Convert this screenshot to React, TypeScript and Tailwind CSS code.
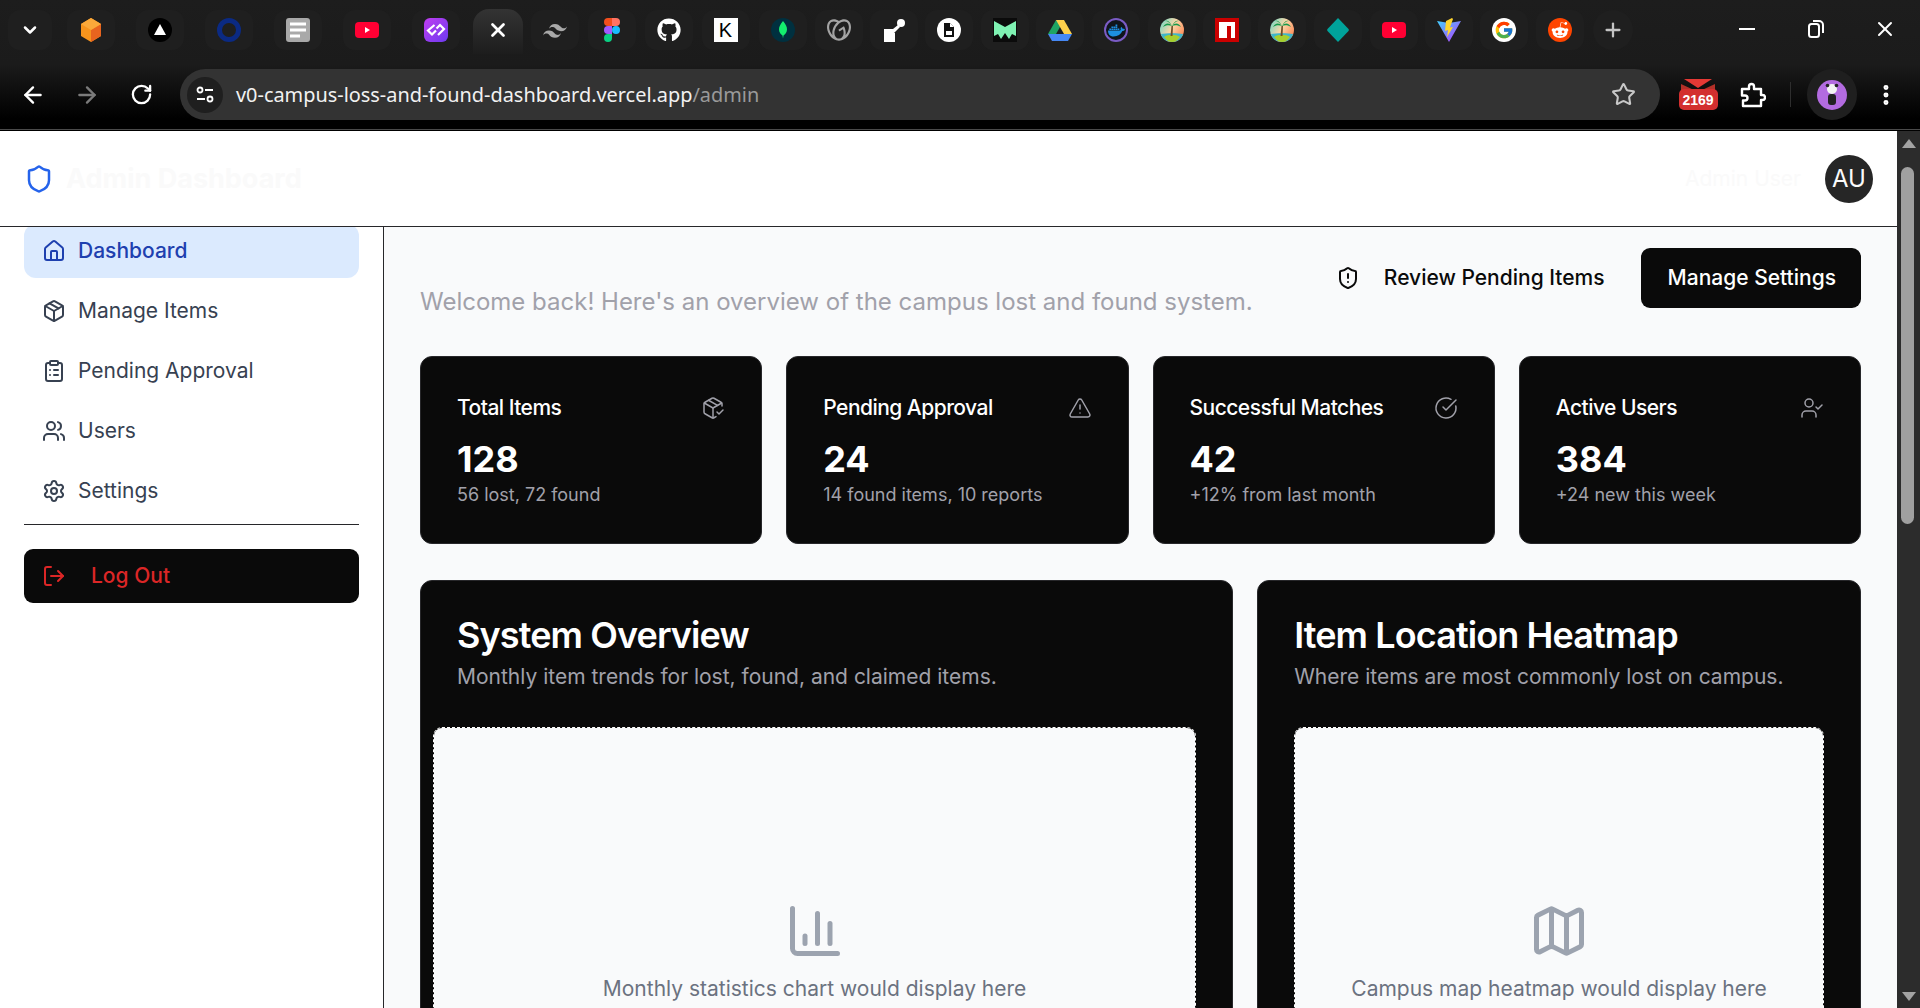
import React from "react";
import {
	ArrowLeft,
	ArrowRight,
	ChartColumn,
	ChevronDown,
	CircleCheckBig,
	ClipboardList,
	EllipsisVertical,
	House,
	LogOut,
	Map as MapIcon,
	Package,
	PackageCheck,
	Plus,
	RotateCw,
	Settings,
	Shield,
	ShieldAlert,
	Star,
	TriangleAlert,
	UserCheck,
	Users,
	X,
} from "lucide-react";
import { FaDocker, FaGithub, FaRedditAlien } from "react-icons/fa";
import { FcGoogle } from "react-icons/fc";
import { SiGodaddy } from "react-icons/si";

const YouTube = () => (
	<svg width="24" height="24" viewBox="0 0 24 24">
		<rect x="0" y="4" width="24" height="16" rx="4" fill="#ff0033" />
		<path d="M10 9l5 3-5 3z" fill="#fff" />
	</svg>
);

const Island = () => (
	<svg width="24" height="24" viewBox="0 0 24 24">
		<defs>
			<linearGradient id="sky" x1="0" y1="0" x2="1" y2="0.6">
				<stop offset="0" stopColor="#5fd6c8" />
				<stop offset="0.55" stopColor="#fbd6a8" />
				<stop offset="1" stopColor="#fb8f5c" />
			</linearGradient>
		</defs>
		<circle cx="12" cy="12" r="12" fill="url(#sky)" />
		<path d="M1 16c5-1 17-1 22 0-1 5-6 8-11 8S2 21 1 16z" fill="#3fb6c9" />
		<path d="M4 19c4-3 12-3 16 0-2 3-5 5-8 5s-6-2-8-5z" fill="#a8cf2c" />
		<path d="M10.500 18l1-10h1.500l-.500 10z" fill="#6b4a24" />
		<path d="M12 8C9 4 5 5 3 9c3-2 6-2 9-1zm0 0c3-4 7-3 9 1-3-2-6-2-9-1zm0 0c-2-4-4-6-7-5 3 0 5 2 7 5zm0 0c2-4 4-6 7-5-3 0-5 2-7 5z" fill="#159a4c" />
	</svg>
);

const tabs: { slot: string; icon: React.ReactNode; active?: boolean }[] = [
	{
		slot: "w-[69px]",
		icon: (
			<svg width="24" height="24" viewBox="0 0 24 24">
				<path d="M12 0l10 6v12l-10 6-10-6V6z" fill="#f7941d" />
				<path d="M12 12l10-6v12l-10 6z" fill="#e8641f" />
				<path d="M12 0l10 6-10 6L2 6z" fill="#fba93a" />
			</svg>
		),
	},
	{
		slot: "w-[69px]",
		icon: (
			<svg width="24" height="24" viewBox="0 0 24 24">
				<circle cx="12" cy="12" r="12" fill="#000" />
				<path d="M12 6l6 11H6z" fill="#fff" />
			</svg>
		),
	},
	{
		slot: "w-[69px]",
		icon: (
			<svg width="24" height="24" viewBox="0 0 24 24">
				<circle cx="12" cy="12" r="9.500" fill="none" stroke="#0b2a83" strokeWidth="5" />
			</svg>
		),
	},
	{
		slot: "w-[69px]",
		icon: (
			<svg width="24" height="24" viewBox="0 0 24 24">
				<rect width="24" height="24" rx="3" fill="#a9a9a9" />
				<path d="M4 6h16M4 12h16M4 18h10" stroke="#fff" strokeWidth="3" />
			</svg>
		),
	},
	{ slot: "w-[69px]", icon: <YouTube /> },
	{
		slot: "w-[69px]",
		icon: (
			<svg width="24" height="24" viewBox="0 0 24 24">
				<defs>
					<linearGradient id="purple" x1="0" y1="0" x2="1" y2="1">
						<stop offset="0" stopColor="#c03df0" />
						<stop offset="1" stopColor="#6d3bf0" />
					</linearGradient>
				</defs>
				<rect width="24" height="24" rx="6" fill="url(#purple)" />
				<path d="M10.500 7L4 12.500l4 4 4-4M14 17l6-6-4-4-3.500 3.500" fill="none" stroke="#fff" strokeWidth="2.200" />
			</svg>
		),
	},
	{ slot: "w-[56px]", active: true, icon: <X size={22} strokeWidth={3} className="text-white" /> },
	{
		slot: "w-[57px]",
		icon: (
			<svg width="24" height="24" viewBox="0 0 24 24" fill="#a8a8a8">
				<path d="M12 6c-3.200 0-5.200 1.600-6 4.800 1.200-1.600 2.600-2.200 4.200-1.800.9.2 1.600.9 2.300 1.600 1.200 1.200 2.600 2.600 5.500 2.600 3.200 0 5.200-1.600 6-4.800-1.200 1.600-2.600 2.200-4.200 1.800-.9-.2-1.600-.9-2.300-1.600C16.300 7.400 14.900 6 12 6zM6 12.600c-3.200 0-5.200 1.600-6 4.800 1.200-1.600 2.600-2.200 4.200-1.800.9.2 1.600.9 2.300 1.600 1.200 1.200 2.600 2.600 5.500 2.600 3.200 0 5.200-1.600 6-4.800-1.200 1.600-2.600 2.200-4.200 1.800-.9-.2-1.600-.9-2.300-1.600-1.200-1.200-2.600-2.600-5.500-2.600z" />
			</svg>
		),
	},
	{
		slot: "w-[57px]",
		icon: (
			<svg width="24" height="24" viewBox="0 0 16 24">
				<path d="M0 4a4 4 0 014-4h4v8H4a4 4 0 01-4-4z" fill="#f24e1e" />
				<path d="M8 0h4a4 4 0 010 8H8z" fill="#ff7262" />
				<path d="M0 12a4 4 0 014-4h4v8H4a4 4 0 01-4-4z" fill="#a259ff" />
				<circle cx="12" cy="12" r="4" fill="#1abcfe" />
				<path d="M0 20a4 4 0 014-4h4v4a4 4 0 01-8 0z" fill="#0acf83" />
			</svg>
		),
	},
	{ slot: "w-[57px]", icon: <FaGithub size={24} className="text-white" /> },
	{
		slot: "w-[57px]",
		icon: (
			<div className="flex h-6 w-6 items-center justify-center bg-white font-['Liberation_Sans',sans-serif] text-[20px] leading-none text-black">
				K
			</div>
		),
	},
	{
		slot: "w-[57px]",
		icon: (
			<svg width="24" height="24" viewBox="0 0 24 24">
				<circle cx="12" cy="12" r="12" fill="#00303f" />
				<path d="M12 3c3 3.500 4 6 4 8.500 0 3-2 5-3.500 6l-.5 3-.5-3C10 16.500 8 14.500 8 11.500 8 9 9 6.500 12 3z" fill="#13ef6e" />
			</svg>
		),
	},
	{ slot: "w-[55px]", icon: <SiGodaddy size={24} className="text-[#a3a3a3]" /> },
	{
		slot: "w-[55px]",
		icon: (
			<svg width="24" height="24" viewBox="0 0 24 24" fill="#fff">
				<circle cx="19" cy="5" r="4" />
				<path d="M16 7l2 2-6 6H13v9H2V11h9z" />
			</svg>
		),
	},
	{
		slot: "w-[56px]",
		icon: (
			<svg width="24" height="24" viewBox="0 0 24 24">
				<circle cx="12" cy="12" r="12" fill="#fff" />
				<path d="M7 5h6l4 4v10H7z" fill="#111" />
				<path d="M13 5v4h4z" fill="#fff" />
				<rect x="9" y="13" width="6" height="4" fill="#fff" />
			</svg>
		),
	},
	{
		slot: "w-[55px]",
		icon: (
			<svg width="24" height="24" viewBox="0 0 24 24">
				<rect width="24" height="24" fill="#0b0b0b" />
				<path d="M1 3l11 6 11-6v15l-4-2-3 5-4-6-4 6-3-5-4 2z" fill="#7ff2b3" />
			</svg>
		),
	},
	{
		slot: "w-[56px]",
		icon: (
			<svg width="24" height="24" viewBox="0 0 24 24">
				<path d="M8 2h8l-8 14H0z" fill="#1fa463" />
				<path d="M16 2l8 14h-8L8 2z" fill="#ffd04b" />
				<path d="M0 16l4 7h16l4-7z" fill="#4688f4" />
			</svg>
		),
	},
	{
		slot: "w-[56px]",
		icon: (
			<div className="relative flex h-6 w-6 items-center justify-center rounded-full bg-[#10151c] ring-2 ring-inset ring-[#7b5cc4]">
				<FaDocker size={17} className="text-[#1d8fe0]" />
			</div>
		),
	},
	{ slot: "w-[55px]", icon: <Island /> },
	{
		slot: "w-[56px]",
		icon: (
			<svg width="24" height="24" viewBox="0 0 24 24">
				<rect width="24" height="24" fill="#cb0000" />
				<path d="M4 4h16v16h-4V8h-4v12H4z" fill="#fff" />
			</svg>
		),
	},
	{ slot: "w-[54px]", icon: <Island /> },
	{
		slot: "w-[58px]",
		icon: (
			<svg width="24" height="24" viewBox="0 0 24 24">
				<path d="M12 0l10.500 11a1.500 1.500 0 010 2L12 24 1.500 13a1.500 1.500 0 010-2z" fill="#00a39b" />
			</svg>
		),
	},
	{ slot: "w-[53px]", icon: <YouTube /> },
	{
		slot: "w-[58px]",
		icon: (
			<svg width="24" height="24" viewBox="0 0 24 24">
				<defs>
					<linearGradient id="vite" x1="0" y1="0" x2="1" y2="1">
						<stop offset="0" stopColor="#41d1ff" />
						<stop offset="1" stopColor="#bd34fe" />
					</linearGradient>
				</defs>
				<path d="M0 3l12 2 12-2-12 21z" fill="url(#vite)" />
				<path d="M15 0L9 3l-1 10 3-1-1 7 6-10-3 .5 3-8.500z" fill="#ffd62e" />
			</svg>
		),
	},
	{
		slot: "w-[52px]",
		icon: (
			<div className="flex h-6 w-6 items-center justify-center rounded-full bg-white">
				<FcGoogle size={20} />
			</div>
		),
	},
	{
		slot: "w-[60px]",
		icon: (
			<div className="flex h-6 w-6 items-center justify-center rounded-full bg-[#ff4500]">
				<FaRedditAlien size={18} className="text-white" />
			</div>
		),
	},
];

const BrowserChrome = () => (
	<div className="h-[131px] w-full shrink-0 border-b border-black">
		<div className="h-[130px] border-b border-[#4a4a4a] bg-[linear-gradient(#1d1d1d_0%,#1b1b1b_50%,#000000_92%)]">
			<div className="flex h-[54px]">
				<div className="ml-2 mt-[10px] flex h-10 w-11 items-center justify-center rounded-xl bg-[#1f1f1f]">
					<ChevronDown size={20} strokeWidth={3} className="text-white" />
				</div>
				<div className="flex pl-1">
					{tabs.map((tab, index) => (
						<div key={index} className={`${tab.slot} flex justify-center`}>
							{tab.active ? (
								<div className="mt-[9px] flex h-[45px] w-[50px] items-start justify-center rounded-t-2xl bg-[linear-gradient(#333333,#1d1d1d)] pt-[10px]">
									{tab.icon}
								</div>
							) : (
								<div className="mt-[10px] flex h-10 w-[48px] items-center justify-center rounded-xl bg-[#1f1f1f]">
									{tab.icon}
								</div>
							)}
						</div>
					))}
				</div>
				<div className="ml-[3px] mt-[10px] flex h-10 w-10 items-center justify-center rounded-full bg-[#1f1f1f]">
					<Plus size={22} strokeWidth={2.500} className="text-[#c4c4c4]" />
				</div>
				<div className="ml-auto flex h-[62px] items-center pb-1 text-white">
					<div className="flex w-[69px] justify-center">
						<div className="h-[2.500px] w-4 bg-white" />
					</div>
					<div className="flex w-[69px] justify-center">
						<svg width="16" height="18" viewBox="0 0 16 18" fill="none" stroke="#fff" strokeWidth="2">
							<rect x="1" y="4" width="10" height="13" rx="2.500" />
							<path d="M5 1h6a4 4 0 014 4v8" />
						</svg>
					</div>
					<div className="flex w-[70px] justify-center">
						<X size={24} strokeWidth={2} />
					</div>
				</div>
			</div>
			<div className="flex h-[66px] items-start pt-[15px]">
				<div className="ml-[6px] flex h-[51px] w-[54px] items-center justify-center text-white">
					<ArrowLeft size={26} strokeWidth={2.200} />
				</div>
				<div className="flex h-[51px] w-[54px] items-center justify-center text-[#7b7b7b]">
					<ArrowRight size={26} strokeWidth={2.200} />
				</div>
				<div className="flex h-[51px] w-[54px] items-center justify-center text-white">
					<RotateCw size={23} strokeWidth={2.400} />
				</div>
				<div className="ml-3 flex h-[51px] w-[1480px] items-center rounded-full bg-[#333333] pl-[7px]">
					<div className="flex h-9 w-9 items-center justify-center rounded-full bg-[#1f1f1f]">
						<svg width="20" height="18" viewBox="0 0 20 18" fill="none" stroke="#fff" strokeWidth="1.800">
							<circle cx="5" cy="4" r="2.500" />
							<path d="M10 4h8M2 13h8" />
							<circle cx="15" cy="13" r="2.500" />
						</svg>
					</div>
					<span className="ml-[13px] font-['Noto_Sans',sans-serif] text-[19.9px] text-[#f1f1f1]">
						v0-campus-loss-and-found-dashboard.vercel.app
						<span className="text-[#9a9a9a]">/admin</span>
					</span>
					<Star size={25} strokeWidth={2} className="ml-auto mr-[24px] text-[#c8c8c8]" />
				</div>
				<div className="ml-[11px] flex h-[51px] w-[54px] flex-col items-center justify-center">
					<svg width="34" height="11" viewBox="0 0 34 11" className="-mb-px">
						<path d="M3 0h28l-14 9z" fill="#e53935" />
						<path d="M0 5l13 6H0zM34 5l-13 6h13z" fill="#b13028" />
					</svg>
					<div className="flex h-[21px] w-[39px] items-center justify-center rounded-[5px] bg-[#d32f2f] font-['Liberation_Sans',sans-serif] text-[14px] font-bold leading-none text-white">
						2169
					</div>
				</div>
				<div className="flex h-[51px] w-[56px] items-center justify-center">
					<svg width="26" height="26" viewBox="0 0 26 26" fill="none" stroke="#fff" strokeWidth="2.400" strokeLinejoin="round">
						<path d="M2 7h7V4.500a2.500 2.500 0 015 0V7h7v6h1.500a2.500 2.500 0 010 5H21v6H3v-5.500h2a2.500 2.500 0 000-5H2z" />
					</svg>
				</div>
				<div className="ml-[9px] mr-[16px] mt-[13px] h-[25px] w-px bg-[#2e2e2e]" />
				<div className="flex h-[51px] w-[50px] items-center justify-center rounded-full bg-[#1f1f1f]">
					<div className="flex h-[30px] w-[30px] items-center justify-center rounded-full bg-[#b36be0]">
						<svg width="16" height="24" viewBox="0 0 16 24">
							<circle cx="8" cy="6" r="5" fill="#f4f4f4" />
							<circle cx="3.500" cy="2.500" r="1.800" fill="#222" />
							<circle cx="12.500" cy="2.500" r="1.800" fill="#222" />
							<rect x="4" y="11" width="8" height="11" rx="3" fill="#222" />
						</svg>
					</div>
				</div>
				<div className="ml-[9px] flex h-[51px] w-10 items-center justify-center text-white">
					<EllipsisVertical size={26} strokeWidth={2.600} />
				</div>
			</div>
		</div>
	</div>
);

const navItems = [
	{ label: "Dashboard", icon: House, active: true },
	{ label: "Manage Items", icon: Package },
	{ label: "Pending Approval", icon: ClipboardList },
	{ label: "Users", icon: Users },
	{ label: "Settings", icon: Settings },
];

const Sidebar = () => (
	<aside className="w-[384px] shrink-0 border-r border-[#27272a] bg-white">
		<div className="-mt-[3px] px-6">
			<nav className="flex flex-col gap-[6px]">
				{navItems.map(({ label, icon: Icon, active }) => (
					<a
						key={label}
						className={`flex h-[54px] items-center gap-3 rounded-xl px-[18px] text-[21px] ${
							active ? "bg-[#dbeafe] font-medium text-[#1e40af]" : "font-normal text-[#374151]"
						}`}
					>
						<Icon size={24} />
						{label}
					</a>
				))}
			</nav>
			<div className="mt-[6px] border-t border-[#27272a] pt-6">
				<button className="flex h-[54px] w-full items-center gap-[25px] rounded-[9px] bg-[#0a0a0a] px-[18px] text-[21px] font-medium text-[#dc2626]">
					<LogOut size={24} />
					Log Out
				</button>
			</div>
		</div>
	</aside>
);

const stats = [
	{ title: "Total Items", value: "128", note: "56 lost, 72 found", icon: PackageCheck },
	{ title: "Pending Approval", value: "24", note: "14 found items, 10 reports", icon: TriangleAlert },
	{ title: "Successful Matches", value: "42", note: "+12% from last month", icon: CircleCheckBig },
	{ title: "Active Users", value: "384", note: "+24 new this week", icon: UserCheck },
];

const StatCard = ({ title, value, note, icon: Icon }: (typeof stats)[number]) => (
	<div className="rounded-xl border border-[#27272a] bg-[#0a0a0a] p-9 text-white">
		<div className="mb-3 flex h-[30px] items-center justify-between">
			<h3 className="text-[21px] font-medium tracking-tight">{title}</h3>
			<Icon size={24} strokeWidth={1.500} className="text-[#a1a1aa]" />
		</div>
		<div className="text-[36px] font-bold leading-[48px]">{value}</div>
		<p className="text-[18px] leading-6 text-[#a1a1aa]">{note}</p>
	</div>
);

const Placeholder = ({ icon: Icon, text }: { icon: typeof MapIcon; text: string }) => (
	<div className="flex h-[451px] flex-col items-center justify-center rounded-[9px] border border-dashed border-white bg-[#f9fafb] bg-clip-padding">
		<Icon size={60} className="mb-[13px] text-[#9ca3af]" />
		<p className="text-[21px] leading-[30px] text-[#6b7280]">{text}</p>
	</div>
);

const Main = () => (
	<main className="min-w-0 flex-1 bg-[#f9fafb] px-9">
		<div className="flex h-[93px] justify-between pt-[21px]">
			<p className="self-end text-[24px] leading-9 text-[#a1a1aa]">
				Welcome back! Here's an overview of the campus lost and found system.
			</p>
			<div className="flex">
				<button className="flex h-[60px] items-center gap-6 pr-9 text-[21px] font-medium text-[#0a0a0a]">
					<ShieldAlert size={24} />
					Review Pending Items
				</button>
				<button className="h-[60px] rounded-[9px] bg-[#0a0a0a] pl-[27px] pr-[25px] text-[21px] font-medium text-white">
					Manage Settings
				</button>
			</div>
		</div>
		<div className="mt-9 grid grid-cols-4 gap-6">
			{stats.map((stat) => (
				<StatCard key={stat.title} {...stat} />
			))}
		</div>
		<div className="mt-9 grid grid-cols-7 gap-6">
			<div className="col-span-4 rounded-xl border border-[#27272a] bg-[#0a0a0a] pb-9 pl-3 pr-9 pt-9">
				<div className="pl-6">
					<h2 className="text-[36px] font-semibold leading-9 tracking-tight text-white">System Overview</h2>
					<p className="mt-[9px] text-[21px] leading-[30px] text-[#a1a1aa]">
						Monthly item trends for lost, found, and claimed items.
					</p>
				</div>
				<div className="mt-[35px]">
					<Placeholder icon={ChartColumn} text="Monthly statistics chart would display here" />
				</div>
			</div>
			<div className="col-span-3 rounded-xl border border-[#27272a] bg-[#0a0a0a] p-9">
				<h2 className="text-[36px] font-semibold leading-9 tracking-tight text-white">Item Location Heatmap</h2>
				<p className="mt-[9px] text-[21px] leading-[30px] text-[#a1a1aa]">
					Where items are most commonly lost on campus.
				</p>
				<div className="mt-[35px]">
					<Placeholder icon={MapIcon} text="Campus map heatmap would display here" />
				</div>
			</div>
		</div>
	</main>
);

const Scrollbar = () => (
	<div className="flex w-[23px] shrink-0 flex-col items-center bg-[#2c2c2c]">
		<div className="mt-[8px] h-0 w-0 border-x-[7px] border-b-[9px] border-x-transparent border-b-[#a3a3a3]" />
		<div className="ml-[-3px] mt-[19px] h-[357px] w-[13px] rounded-full bg-[#a0a0a0]" />
		<div className="mt-auto mb-[7px] h-0 w-0 border-x-[7px] border-t-[9px] border-x-transparent border-t-[#a3a3a3]" />
	</div>
);

const App: React.FC = () => {
	return (
		<div className="flex h-[1008px] w-full flex-col overflow-hidden bg-white font-['Inter',sans-serif]">
			<BrowserChrome />
			<div className="flex min-h-0 flex-1">
				<div className="flex min-w-0 flex-1 flex-col">
					<header className="relative z-10 flex h-[96px] shrink-0 items-center justify-between border-b border-[#27272a] bg-white px-6">
						<div className="flex items-center gap-3">
							<Shield size={30} className="text-[#2563eb]" />
							<span className="mt-[2px] text-[27px] font-bold text-[#fafafa]">Admin Dashboard</span>
						</div>
						<div className="flex items-center gap-6">
							<span className="text-[21px] text-[#fafafa]">Admin User</span>
							<div className="flex h-12 w-12 items-center justify-center rounded-full bg-[#262626] text-[24px] text-[#fafafa]">
								AU
							</div>
						</div>
					</header>
					<div className="flex min-h-0 flex-1 overflow-hidden">
						<Sidebar />
						<Main />
					</div>
				</div>
				<Scrollbar />
			</div>
		</div>
	);
};

export default App;
